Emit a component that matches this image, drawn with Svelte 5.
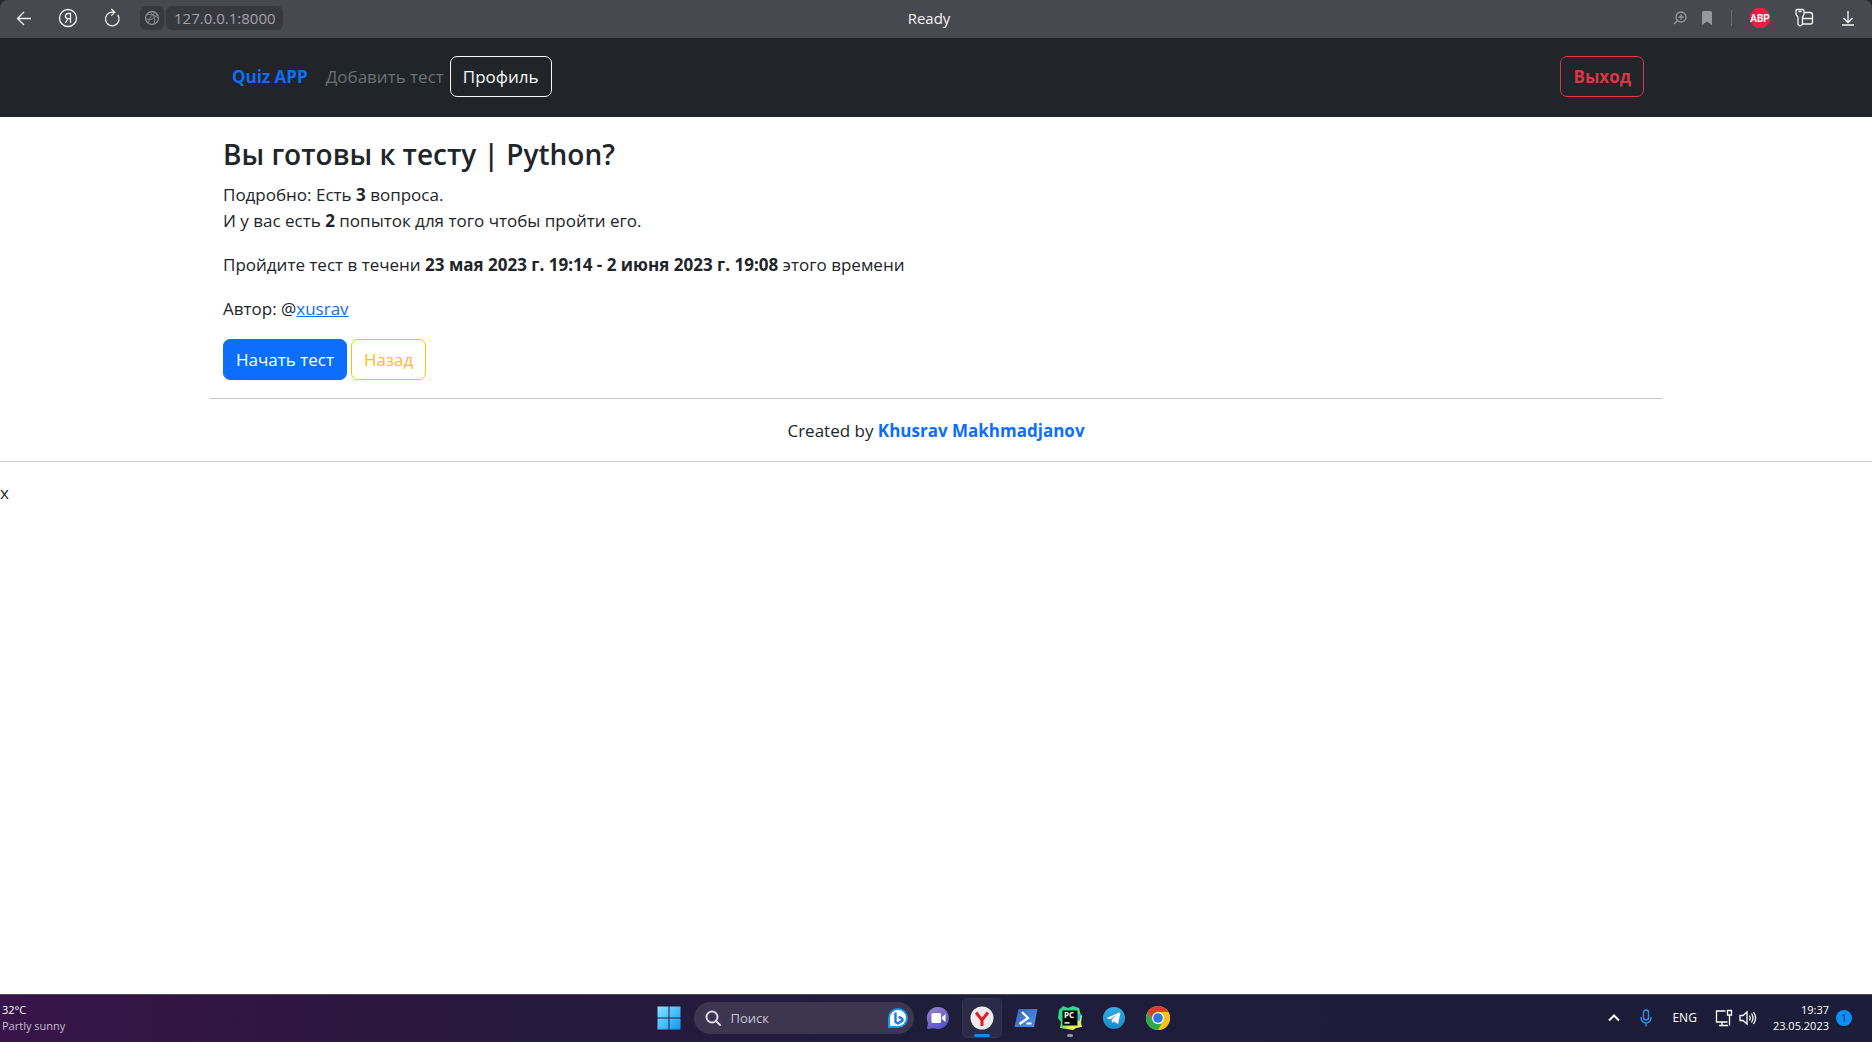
<script>
  const quiz = {
    title: 'Python',
    questions: 3,
    attempts: 2,
    period: '23 мая 2023 г. 19:14 - 2 июня 2023 г. 19:08',
    author: 'xusrav'
  };
  let address = $state('127.0.0.1:8000');
</script>

<div class="screen">
  <header class="browser">
    <div class="tools">
      <button class="tool" aria-label="Back">
        <svg width="16" height="16" viewBox="0 0 16 16" class="line"><path d="M15 8.500H1.500M8 2 1.500 8.500 8 15" /></svg>
      </button>
      <button class="tool" aria-label="Yandex">
        <svg width="20" height="20" viewBox="0 0 20 20" class="line">
          <circle cx="10" cy="10" r="8.500" /><path d="M12.500 15V5.500H10a2.600 2.600 0 0 0 0 5.200h2.500M10.200 10.700 7.200 15" />
        </svg>
      </button>
      <button class="tool" aria-label="Reload">
        <svg width="18" height="20" viewBox="0 0 18 20" class="line"><path d="M14.800 7A6.800 6.800 0 1 1 9 4.200h2.500M8.300 1l3.500 3.200-3.500 3.400" /></svg>
      </button>
      <button class="site" aria-label="Site information">
        <svg width="16" height="16" viewBox="0 0 16 16" class="line">
          <circle cx="8" cy="8" r="6.500" /><path class="thin" d="M1.500 8.500C6 11 11 8.500 13 4M4.500 13.500C5 9 7 5 11.500 2.500M5.500 2c4.500 2 6 7 4.500 12M2.500 5c4-1.500 9 0 12 3.500" />
        </svg>
      </button>
      <input class="address" aria-label="Address" bind:value={address} />
    </div>
    <div class="title">Ready</div>
    <div class="tools end">
      <button class="small" aria-label="Zoom">
        <svg width="14" height="14" viewBox="0 0 14 14" class="line"><circle cx="8" cy="6" r="5" /><path d="M8 3.500v5M5.500 6h5M4.500 9.500 1 13" /></svg>
      </button>
      <button class="small" aria-label="Bookmark">
        <svg width="12" height="14" viewBox="0 0 12 14"><path d="M1 1.500Q1 0 2.500 0h7Q11 0 11 1.500V14L6 10.500 1 14z" fill="#97979d" /></svg>
      </button>
      <span class="divider"></span>
      <button class="tool" aria-label="Adblock Plus">
        <svg width="20" height="20" viewBox="0 0 20 20">
          <path d="M6 0h8l6 6v8l-6 6H6l-6-6V6z" fill="#ed1e45" />
          <text class="abp" x="10" y="14" text-anchor="middle" fill="#fff">ABP</text>
        </svg>
      </button>
      <button class="tool" aria-label="Passwords">
        <svg width="20" height="20" viewBox="0 0 20 20" class="line">
          <path d="M3 1.500h5.500q1.500 0 1.500 1.500v3.500L8.500 9v7.500L6 18l-2-1.500V9L2 6.500V3q0-1.500 1-1.500zM4.500 3.500h3M10.500 4.500h5.500q2.500 0 2.500 2.500v7q0 2-2 2H9M9 10.500h9.500" />
        </svg>
      </button>
      <button class="tool" aria-label="Downloads">
        <svg width="14" height="16" viewBox="0 0 14 16" class="line"><path d="M7 1v11M2.500 8 7 12.500 11.500 8M1 15h12" /></svg>
      </button>
    </div>
  </header>

  <nav class="navbar">
    <div class="container nav-row">
      <a class="brand" href="/">Quiz APP</a>
      <a class="nav-link" href="/add">Добавить тест</a>
      <a class="btn light" href="/profile">Профиль</a>
      <a class="btn danger" href="/logout">Выход</a>
    </div>
  </nav>

  <main class="container">
    <h1>Вы готовы к тесту | {quiz.title}?</h1>
    <p>
      Подробно: Есть <b>{quiz.questions}</b> вопроса.<br />
      И у вас есть <b>{quiz.attempts}</b> попыток для того чтобы пройти его.
    </p>
    <p>Пройдите тест в течени <b>{quiz.period}</b> этого времени</p>
    <p>Автор: @<a href="/author">{quiz.author}</a></p>
    <div class="actions">
      <button class="btn primary">Начать тест</button>
      <button class="btn warning">Назад</button>
    </div>
  </main>

  <footer>
    <div class="credit">Created by <a href="/creator">Khusrav Makhmadjanov</a></div>
  </footer>
  <div class="stray">x</div>

  <div class="taskbar">
    <div class="weather"><span>32°C</span><span class="dim">Partly sunny</span></div>

    <div class="apps">
      <button class="app" aria-label="Start">
        <svg width="24" height="24" viewBox="0 0 24 24">
          <defs>
            <linearGradient id="win" gradientUnits="userSpaceOnUse" x1="0" y1="0" x2="24" y2="24"><stop stop-color="#8ce7ff" /><stop offset="1" stop-color="#0a96f8" /></linearGradient>
          </defs>
          <path d="M.5.500h11v11H.5zM12.500.500h11v11h-11zM.5 12.500h11v11H.5zM12.500 12.500h11v11h-11z" fill="url(#win)" />
        </svg>
      </button>
      <label class="search">
        <svg width="16" height="16" viewBox="0 0 16 16" fill="none" stroke="#dcdae2" stroke-width="2" stroke-linecap="round"><circle cx="7" cy="7" r="5.500" /><path d="m11 11 4 4" /></svg>
        <input aria-label="Поиск" placeholder="Поиск" />
        <svg width="20" height="20" viewBox="0 0 20 20">
          <path d="M1 19V10a9 9 0 1 1 9 9z" fill="#fff" stroke="#1696e8" stroke-width="2" />
          <path d="M7.500 4.500v9.500l2.500 1.500 4.500-3q.5-2.500-4-3.500" fill="none" stroke="#1d79df" stroke-width="2.400" stroke-linejoin="round" />
        </svg>
      </label>
      <button class="app" aria-label="Chat">
        <svg width="24" height="24" viewBox="0 0 24 24">
          <defs><linearGradient id="chat" x1="0" y1="0" x2=".6" y2="1"><stop stop-color="#a183c8" /><stop offset="1" stop-color="#5456cc" /></linearGradient></defs>
          <path d="M12 1a11 11 0 1 1-4 21.300L1 23l1-6A11 11 0 0 1 12 1z" fill="url(#chat)" />
          <rect x="5.500" y="7" width="9.500" height="10" rx="1.500" fill="#fff" /><path d="m16 11 3.500-3v8L16 13z" fill="#fff" />
        </svg>
      </button>
      <button class="app active" aria-label="Yandex Browser">
        <svg width="24" height="24" viewBox="0 0 24 24">
          <circle cx="12" cy="12" r="11.500" fill="#ececee" />
          <path d="M6 6.500 12 14l6-7.500M12 13.500V20" fill="none" stroke="#e01c20" stroke-width="3" />
        </svg>
      </button>
      <button class="app" aria-label="PowerShell">
        <svg width="24" height="24" viewBox="0 0 24 24">
          <defs><linearGradient id="shell" x1="0" y1="0" x2="1" y2="1"><stop stop-color="#3564b7" /><stop offset="1" stop-color="#5090ec" /></linearGradient></defs>
          <path d="M4.500 3H23.500L20 21H.5z" fill="url(#shell)" />
          <path d="m8 6 6 6-8.500 6M12.500 17.500h5" fill="none" stroke="#fff" stroke-width="2.200" />
        </svg>
      </button>
      <button class="app running" aria-label="PyCharm">
        <svg width="24" height="24" viewBox="0 0 24 24">
          <defs><linearGradient id="charm" x1="0" y1="0" x2="1" y2="1"><stop stop-color="#20d68b" /><stop offset=".45" stop-color="#32dd81" /><stop offset=".7" stop-color="#f4ef50" /><stop offset="1" stop-color="#d5f24b" /></linearGradient></defs>
          <path d="m1 4 4-4 5 2 5-2 6 2 1 5 2 3-1 7 1 4-6 1-3 2-6-1-7-1 1-6-3-4z" fill="url(#charm)" />
          <path d="m18 7 5 1-1 7-4-1z" fill="#16bff0" />
          <path d="M4.500 4.500h15v15h-15z" fill="#050505" />
          <text x="11" y="12" text-anchor="middle" fill="#fff" font-size="8" font-weight="700">PC</text>
          <path d="M6.500 16.200h5v1.400h-5z" fill="#fff" />
        </svg>
      </button>
      <button class="app" aria-label="Telegram">
        <svg width="24" height="24" viewBox="0 0 24 24">
          <defs><linearGradient id="tg" x1="0" y1="0" x2="0" y2="1"><stop stop-color="#32afe3" /><stop offset="1" stop-color="#168acb" /></linearGradient></defs>
          <circle cx="12" cy="12" r="11" fill="url(#tg)" />
          <path d="M4.500 12 17.500 6.500q1-.3.800.7l-2 10q-.3 1-1.300.4l-3.200-2.300-1.800 1.700-.4-3.200 5-4.800-6.500 4.200z" fill="#fff" />
        </svg>
      </button>
      <button class="app" aria-label="Chrome">
        <svg width="24" height="24" viewBox="0 0 24 24">
          <circle cx="12" cy="12" r="12" fill="#fbc116" />
          <path d="M1.600 6A12 12 0 0 1 22.400 6H12L7 15z" fill="#e33b2e" />
          <path d="M1.600 6 6.800 15A6 6 0 0 0 12 18h5.200L12 24A12 12 0 0 1 1.600 6z" fill="#2da94f" />
          <path d="M17.200 15 12 24a12 12 0 0 0 10.400-18H12z" fill="#fbc116" />
          <circle cx="12" cy="12" r="6" fill="#fff" /><circle cx="12" cy="12" r="4.800" fill="#2b78ea" />
        </svg>
      </button>
    </div>

    <div class="tray">
      <button aria-label="Hidden icons"><svg width="12" height="8" viewBox="0 0 12 8" fill="none" stroke="#fff" stroke-width="2"><path d="m1 6.500 5-5 5 5" /></svg></button>
      <button class="mic" aria-label="Microphone"><svg width="12" height="18" viewBox="0 0 12 18" fill="none" stroke="#3492ea" stroke-width="1.400"><rect x="3.500" y="1" width="5" height="10" rx="2.500" /><path d="M1 8v1a5 5 0 0 0 10 0V8M6 14v3.500" /></svg></button>
      <span class="lang">ENG</span>
      <button class="status" aria-label="Network and volume">
        <svg width="18" height="18" viewBox="0 0 18 18" fill="none" stroke="#fff" stroke-width="1.300"><path d="M10.500 2H1.500v11h11M4 16.500h9M7 13v3.500M12.500 1.500h4v4.500h-4zM14.500 6v10.500" /></svg>
        <svg width="18" height="16" viewBox="0 0 18 16" fill="none" stroke="#fff" stroke-width="1.300"><path d="M1 5.500h3L8 2v12l-4-3.500H1zM10.500 5.500q1.500 2.500 0 5M12.500 3.500q3 4.500 0 9M14.500 2q4.200 6 0 12" /></svg>
      </button>
      <div class="clock"><span>19:37</span><span>23.05.2023</span></div>
      <span class="badge">1</span>
    </div>
  </div>
</div>

<style>
  :global(body) {
    margin: 0;
    background: #fff;
  }
  .screen {
    min-height: 100vh;
    display: flex;
    flex-direction: column;
    font: 17px/26px "Open Sans", "Noto Sans", sans-serif;
    color: #212529;
    background: linear-gradient(#29292e 0 20px, #fff 20px);
  }
  .screen * {
    box-sizing: border-box;
  }
  button,
  input {
    font: inherit;
    border: 0;
    background: none;
    padding: 0;
    color: inherit;
  }
  svg {
    display: block;
    flex: none;
  }
  .line {
    fill: none;
    stroke: currentColor;
    stroke-width: 1.3;
  }
  .thin {
    stroke-width: 1;
  }
  .abp {
    font: 700 10px Roboto, sans-serif;
  }

  .browser {
    display: grid;
    grid-template-columns: 1fr auto 1fr;
    align-items: center;
    height: 38px;
    padding: 0 2px 2px;
    background: #484851;
    border-radius: 8px 8px 0 0;
    color: #f4f4f5;
    font-size: 15px;
  }
  .tools {
    display: flex;
    align-items: center;
    height: 36px;
  }
  .end {
    justify-content: flex-end;
  }
  .tool {
    display: grid;
    place-items: center;
    width: 44px;
    height: 36px;
  }
  .small {
    display: grid;
    place-items: center;
    width: 27px;
    height: 36px;
    color: #97979d;
  }
  .site {
    display: grid;
    place-items: center;
    width: 24px;
    height: 24px;
    margin: 0 2px 0 6px;
    border-radius: 6px;
    background: #383841;
    color: #8b8b92;
  }
  .address {
    width: 117px;
    height: 24px;
    padding: 0 8px;
    border-radius: 6px;
    background: #383841;
    color: #a2a2a8;
  }
  .divider {
    width: 1px;
    height: 16px;
    margin: 0 6px 0 11px;
    background: #6d6d75;
  }
  .title {
    padding-right: 14px;
  }

  .container {
    width: 100%;
    max-width: 1452px;
    margin: 0 auto;
    padding: 0 13px;
  }
  .navbar {
    background: #212529;
    padding: 18px 0 20px;
  }
  .nav-row {
    display: flex;
    align-items: center;
    padding: 0 18px 0 22px;
  }
  .brand {
    margin-right: 18px;
    font-weight: 700;
    color: #0d6efd;
    text-decoration: none;
  }
  .nav-link {
    margin-right: 6px;
    color: #6a7077;
    text-decoration: none;
  }
  .btn {
    height: 41px;
    padding: 0 12px;
    border: 1px solid;
    border-radius: 7px;
    line-height: 39px;
    text-decoration: none;
    white-space: nowrap;
  }
  .light {
    color: #f8f9fa;
  }
  .danger {
    margin-left: auto;
    color: #dc3545;
    font-weight: 700;
  }
  .primary {
    background: #0d6efd;
    border-color: #0d6efd;
    color: #fff;
  }
  .warning {
    color: #ffc107;
  }

  main.container {
    padding-top: 18px;
    padding-bottom: 18px;
    border-bottom: 1px solid #c8c9ca;
  }
  h1 {
    margin: 0 0 9px;
    font-size: 28px;
    line-height: 38px;
    font-weight: 600;
  }
  p {
    margin: 0 0 18px;
  }
  p a {
    color: #0d6efd;
  }
  .actions {
    display: flex;
    gap: 4px;
    margin-top: -1px;
  }
  footer {
    padding: 19px 0 17px;
    border-bottom: 1px solid #c8c9ca;
    text-align: center;
  }
  .credit a {
    color: #0d6efd;
    font-weight: 700;
    text-decoration: none;
  }
  .stray {
    margin: 18px 0;
  }

  .taskbar {
    display: grid;
    grid-template-columns: 1fr auto 1fr;
    align-items: center;
    height: 48px;
    margin-top: auto;
    padding-bottom: 2px;
    border-top: 1px solid #4b4658;
    background: linear-gradient(90deg, #38144a, #351545 6%, #2a173f 22%, #1f1d3a 50%, #1c1d38);
    color: #fff;
    font-size: 11px;
    line-height: 16px;
  }
  .weather,
  .clock {
    display: flex;
    flex-direction: column;
  }
  .weather {
    padding-left: 2px;
  }
  .dim {
    color: #c5bccb;
  }
  .apps {
    display: flex;
    align-items: center;
    padding-right: 46px;
  }
  .app {
    position: relative;
    display: grid;
    place-items: center;
    width: 40px;
    height: 40px;
    margin: 0 2px;
    border-radius: 5px;
  }
  .active {
    background: #2c2b47;
    box-shadow: inset 0 0 0 1px #343350;
  }
  .active::after,
  .running::after {
    content: "";
    position: absolute;
    bottom: 1px;
    left: 50%;
    width: 16px;
    height: 3px;
    margin-left: -8px;
    border-radius: 2px;
    background: #0a8bf5;
  }
  .running::after {
    width: 6px;
    margin-left: -3px;
    background: #95949f;
  }
  .search {
    display: flex;
    align-items: center;
    gap: 10px;
    width: 220px;
    height: 32px;
    margin: 0 2px 0 3px;
    padding: 0 6px 0 11px;
    border-radius: 16px;
    background: #3c3651;
    font-size: 13px;
  }
  .search input {
    flex: 1;
    min-width: 0;
  }
  .search input::placeholder {
    color: #c9c6d1;
    opacity: 1;
  }
  .tray {
    display: flex;
    align-items: center;
    justify-content: flex-end;
    padding-right: 20px;
  }
  .mic {
    margin: 0 20px;
  }
  .status {
    display: flex;
    align-items: center;
    gap: 6px;
    margin: 0 16px 0 18px;
  }
  .lang {
    font-size: 12px;
  }
  .clock {
    text-align: right;
    margin-right: 7px;
  }
  .badge {
    width: 16px;
    height: 16px;
    border-radius: 50%;
    background: #0a90f8;
    color: #17233f;
    text-align: center;
    font-size: 10px;
  }
</style>
